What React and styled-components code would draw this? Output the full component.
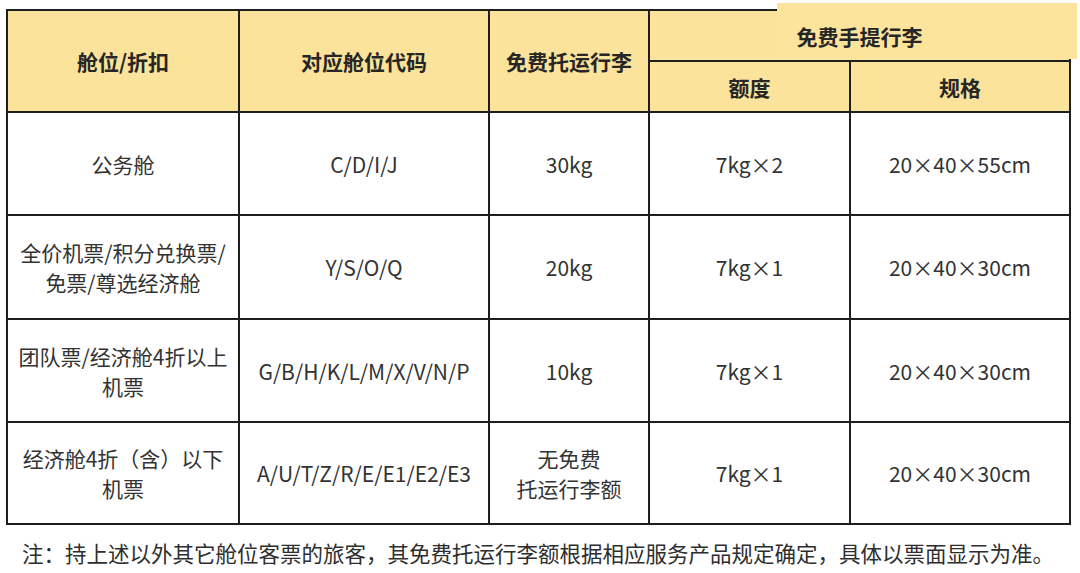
import React from "react";
import styled, { createGlobalStyle } from "styled-components";

const rows = [
  { cabin: "公务舱", codes: "C/D/I/J", checked: "30kg", qty: "7kg×2", size: "20×40×55cm", h: 103 },
  { cabin: "全价机票/积分兑换票/\n免票/尊选经济舱", codes: "Y/S/O/Q", checked: "20kg", qty: "7kg×1", size: "20×40×30cm", h: 104 },
  { cabin: "团队票/经济舱4折以上\n机票", codes: "G/B/H/K/L/M/X/V/N/P", checked: "10kg", qty: "7kg×1", size: "20×40×30cm", h: 103 },
  { cabin: "经济舱4折（含）以下\n机票", codes: "A/U/T/Z/R/E/E1/E2/E3", checked: "无免费\n托运行李额", qty: "7kg×1", size: "20×40×30cm", h: 102 },
];

const App = () => {
  return (
    <Page>
      <GlobalStyle />
      <TableWrap>
        {/* yellow patch pasted over the top-right corner */}
        <Patch />
        <Table>
          <colgroup>
            <col style={{ width: 232 }} />
            <col style={{ width: 250 }} />
            <col style={{ width: 160 }} />
            <col style={{ width: 201 }} />
            <col style={{ width: 220 }} />
          </colgroup>
          <thead>
            <tr>
              <Th rowSpan={2}>舱位/折扣</Th>
              <Th rowSpan={2}>对应舱位代码</Th>
              <Th rowSpan={2}>免费托运行李</Th>
              <Th colSpan={2} $h={51}>
                <OnTop>免费手提行李</OnTop>
              </Th>
            </tr>
            <tr>
              <Th $h={51}>额度</Th>
              <Th $h={51}>规格</Th>
            </tr>
          </thead>
          <tbody>
            {rows.map((r, i) => (
              <tr key={i}>
                <Td $h={r.h}>{r.cabin}</Td>
                <Td>{r.codes}</Td>
                <Td>{r.checked}</Td>
                <Td>{r.qty}</Td>
                <Td>{r.size}</Td>
              </tr>
            ))}
          </tbody>
        </Table>
      </TableWrap>
      <Note>注：持上述以外其它舱位客票的旅客，其免费托运行李额根据相应服务产品规定确定，具体以票面显示为准。</Note>
    </Page>
  );
};

const GlobalStyle = createGlobalStyle`
  body {
    margin: 0;
    background: #ffffff;
    font-family: "Noto Sans CJK SC", "Noto Sans", sans-serif;
  }
`;

const Page = styled.div`
  width: 1080px;
  height: 573px;
  padding: 9px 0 0 6px;
  box-sizing: border-box;
  background: #ffffff;
  overflow: hidden;
`;

const TableWrap = styled.div`
  position: relative;
  width: 1064px;
`;

const Patch = styled.div`
  position: absolute;
  left: 771px;
  top: -6px;
  width: 300px;
  height: 56px;
  background: #fde49d;
  z-index: 1;
`;

const Table = styled.table`
  border-collapse: collapse;
  table-layout: fixed;
  width: 1064px;
  color: #333333;
`;

const Th = styled.th`
  height: ${(p) => (p.$h ? `${p.$h - 2}px` : "auto")};
  padding: 0;
  border: 2px solid #1e1e1e;
  background: #fce39b;
  color: #262626;
  font-size: 21px;
  font-weight: 700;
  text-align: center;
  vertical-align: middle;
`;

const OnTop = styled.span`
  position: relative;
  z-index: 2;
`;

const Td = styled.td`
  height: ${(p) => (p.$h ? `${p.$h - 2}px` : "auto")};
  padding: 0;
  border: 2px solid #1e1e1e;
  font-size: 21px;
  line-height: 30px;
  text-align: center;
  vertical-align: middle;
  white-space: pre-line;
`;

const Note = styled.p`
  margin: 14px 0 0 16px;
  font-size: 21.5px;
  line-height: 28px;
  color: #2e2e2e;
  white-space: nowrap;
`;

export default App;
